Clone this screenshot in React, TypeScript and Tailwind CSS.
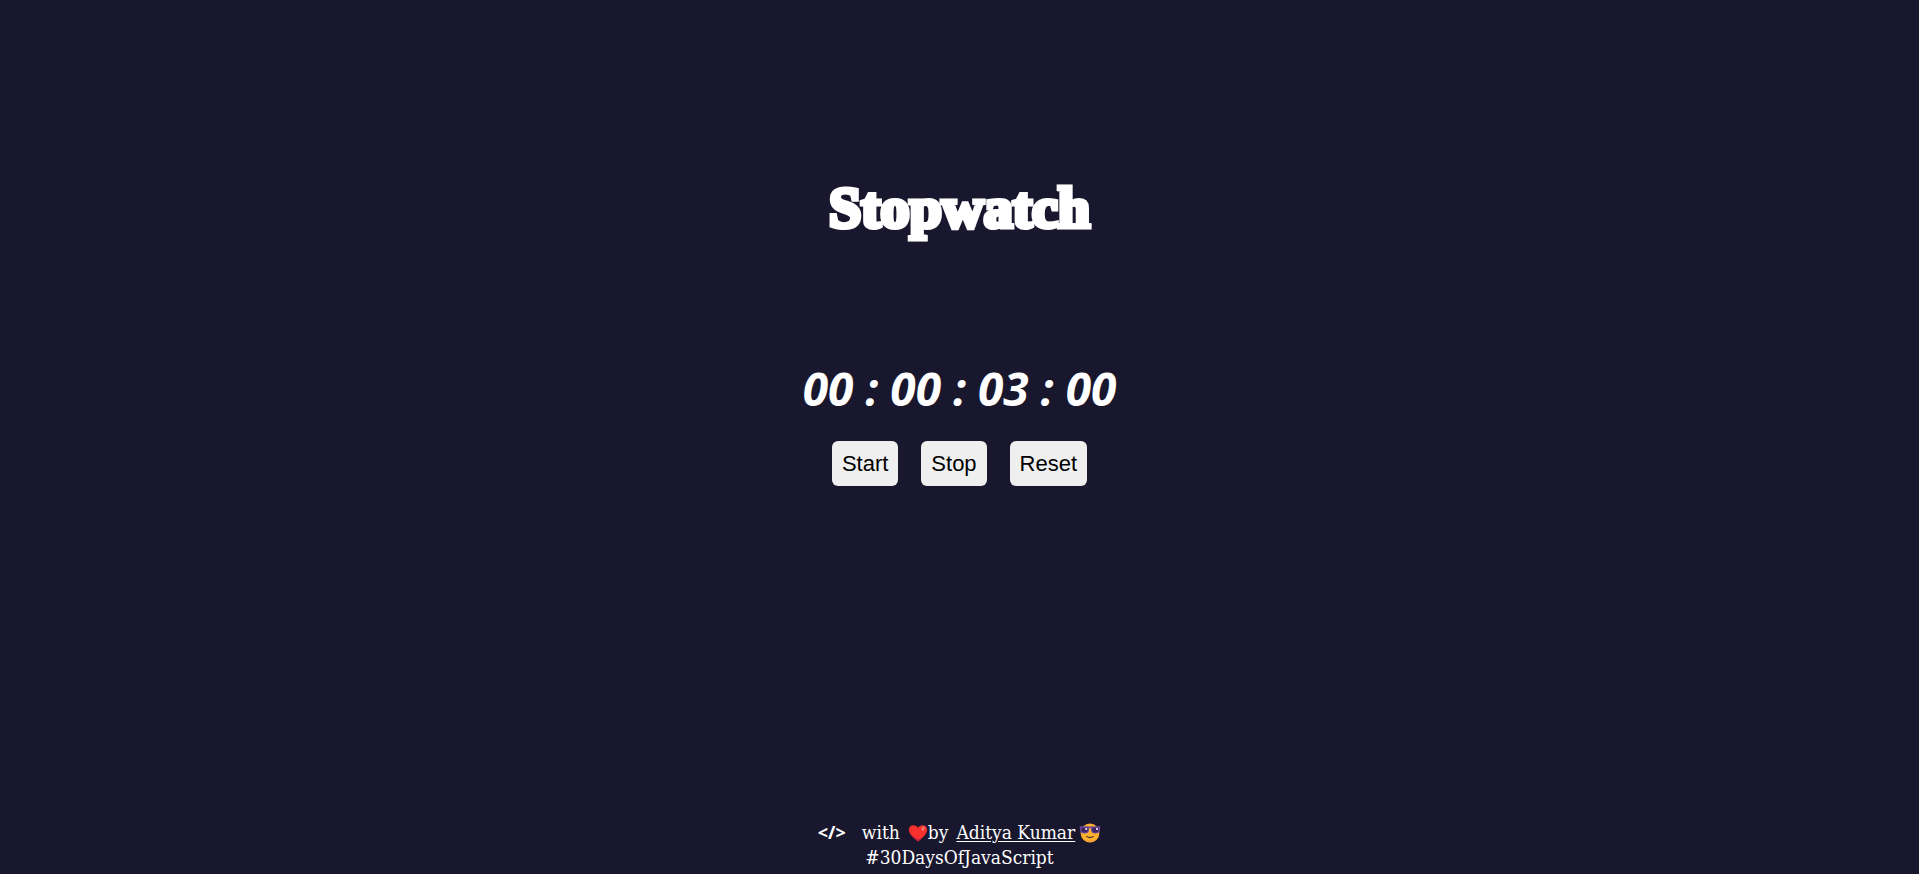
import { useEffect, useState } from "react";

const pad = (n: number) => String(n).padStart(2, "0");

function HeartIcon() {
  return (
    <svg viewBox="0 0 20 20" className="h-5 w-5" role="img" aria-label="love">
      <path d="M10 18.600C7.600 16.400 .8 11.600 .8 6.800.8 4 2.900 2.200 5.400 2.200c2 0 3.700 1 4.600 2.600.9-1.600 2.600-2.600 4.600-2.600 2.500 0 4.600 1.800 4.600 4.600 0 4.800-6.800 9.600-9.200 11.800Z" fill="#f8312f" />
      <path d="M1.200 8.600c1 4 6.200 7.800 8.800 10 1.200-1.100 3-2.500 4.800-4.200-2 1.200-3.400 1.600-4.800 1.600-3-1-6.800-4-8.800-7.400Z" fill="#ca1f3f" />
      <ellipse cx="15.200" cy="5.600" rx="2.400" ry="1.500" transform="rotate(-55 15.200 5.600)" fill="#f37366" />
    </svg>
  );
}

function SunglassesIcon() {
  return (
    <svg viewBox="0 0 22 20" className="h-5 w-[22px]" role="img" aria-label="cool">
      <circle cx="11" cy="10" r="9.400" fill="#ffb02e" />
      <path d="M4 16a9.400 9.400 0 0 0 14 0c-4 2-10 2-14 0Z" fill="#f59a38" />
      <path d="M.6 3.600h20.800v1.600H.6Z" fill="#6d4a99" />
      <path d="M1 3.600h9v3.200c0 2.600-1.600 3.800-4.300 3.800C2.900 10.600 1 9.400 1 6.800ZM12 3.600h9v3.200c0 2.600-1.900 3.800-4.700 3.800-2.700 0-4.300-1.200-4.300-3.800Z" fill="#6d4a99" />
      <path d="M2.400 4.800h6.400v2c0 1.700-1 2.700-3.100 2.700s-3.300-1-3.300-2.700ZM13.200 4.800h6.400v2c0 1.700-1.200 2.700-3.300 2.700s-3.100-1-3.100-2.700Z" fill="#3f2560" />
      <circle cx="7.200" cy="5.900" r="1" fill="#fff" />
      <circle cx="18" cy="5.900" r="1" fill="#fff" />
      <path d="M7.800 13.600q3.200 2 6.400 0" fill="none" stroke="#402a32" strokeWidth="1.200" strokeLinecap="round" />
    </svg>
  );
}

function ControlButton({ label, onClick }: { label: string; onClick: () => void }) {
  return (
    <button
      type="button"
      onClick={onClick}
      className="cursor-pointer rounded-md bg-[#efefef] px-[10px] py-[10px] font-['Liberation_Sans',sans-serif] text-[22px] leading-[25px] text-black"
    >
      {label}
    </button>
  );
}

export default function App() {
  const [time, setTime] = useState(300);
  const [running, setRunning] = useState(false);

  useEffect(() => {
    if (!running) return;
    const id = window.setInterval(() => setTime((t) => t + 1), 10);
    return () => window.clearInterval(id);
  }, [running]);

  const parts = [
    Math.floor(time / 360000),
    Math.floor(time / 6000) % 60,
    Math.floor(time / 100) % 60,
    time % 100,
  ];

  return (
    <div className="flex min-h-screen flex-col items-center bg-[#19172d] text-white">
      <header className="pt-[168px]">
        <h1 className="font-['Liberation_Serif',serif] text-[58px] leading-[80px] font-bold [-webkit-text-stroke:5px_white]">
          Stopwatch
        </h1>
      </header>

      <main className="flex grow flex-col items-center pt-[108px]">
        <p className="font-['Open_Sans',sans-serif] text-[46px] leading-[65px] font-bold whitespace-nowrap italic">
          {parts.map(pad).join(" : ")}
        </p>
        <div className="mt-5 flex gap-[23px]">
          <ControlButton label="Start" onClick={() => setRunning(true)} />
          <ControlButton label="Stop" onClick={() => setRunning(false)} />
          <ControlButton
            label="Reset"
            onClick={() => {
              setRunning(false);
              setTime(0);
            }}
          />
        </div>
      </main>

      <footer className="pb-1 text-center font-['DejaVu_Serif_Condensed','DejaVu_Serif',serif] text-[19px] leading-[25px]">
        <p className="flex items-center justify-center">
          <span className="mr-4 font-['Open_Sans',sans-serif] text-[18px] font-bold">&lt;/&gt;</span>
          <span className="mr-2">with</span>
          <HeartIcon />
          <span className="mr-2">by</span>
          <a href="#aditya-kumar" className="mr-1 underline underline-offset-2">
            Aditya Kumar
          </a>
          <SunglassesIcon />
        </p>
        <p>#30DaysOfJavaScript</p>
      </footer>
    </div>
  );
}
